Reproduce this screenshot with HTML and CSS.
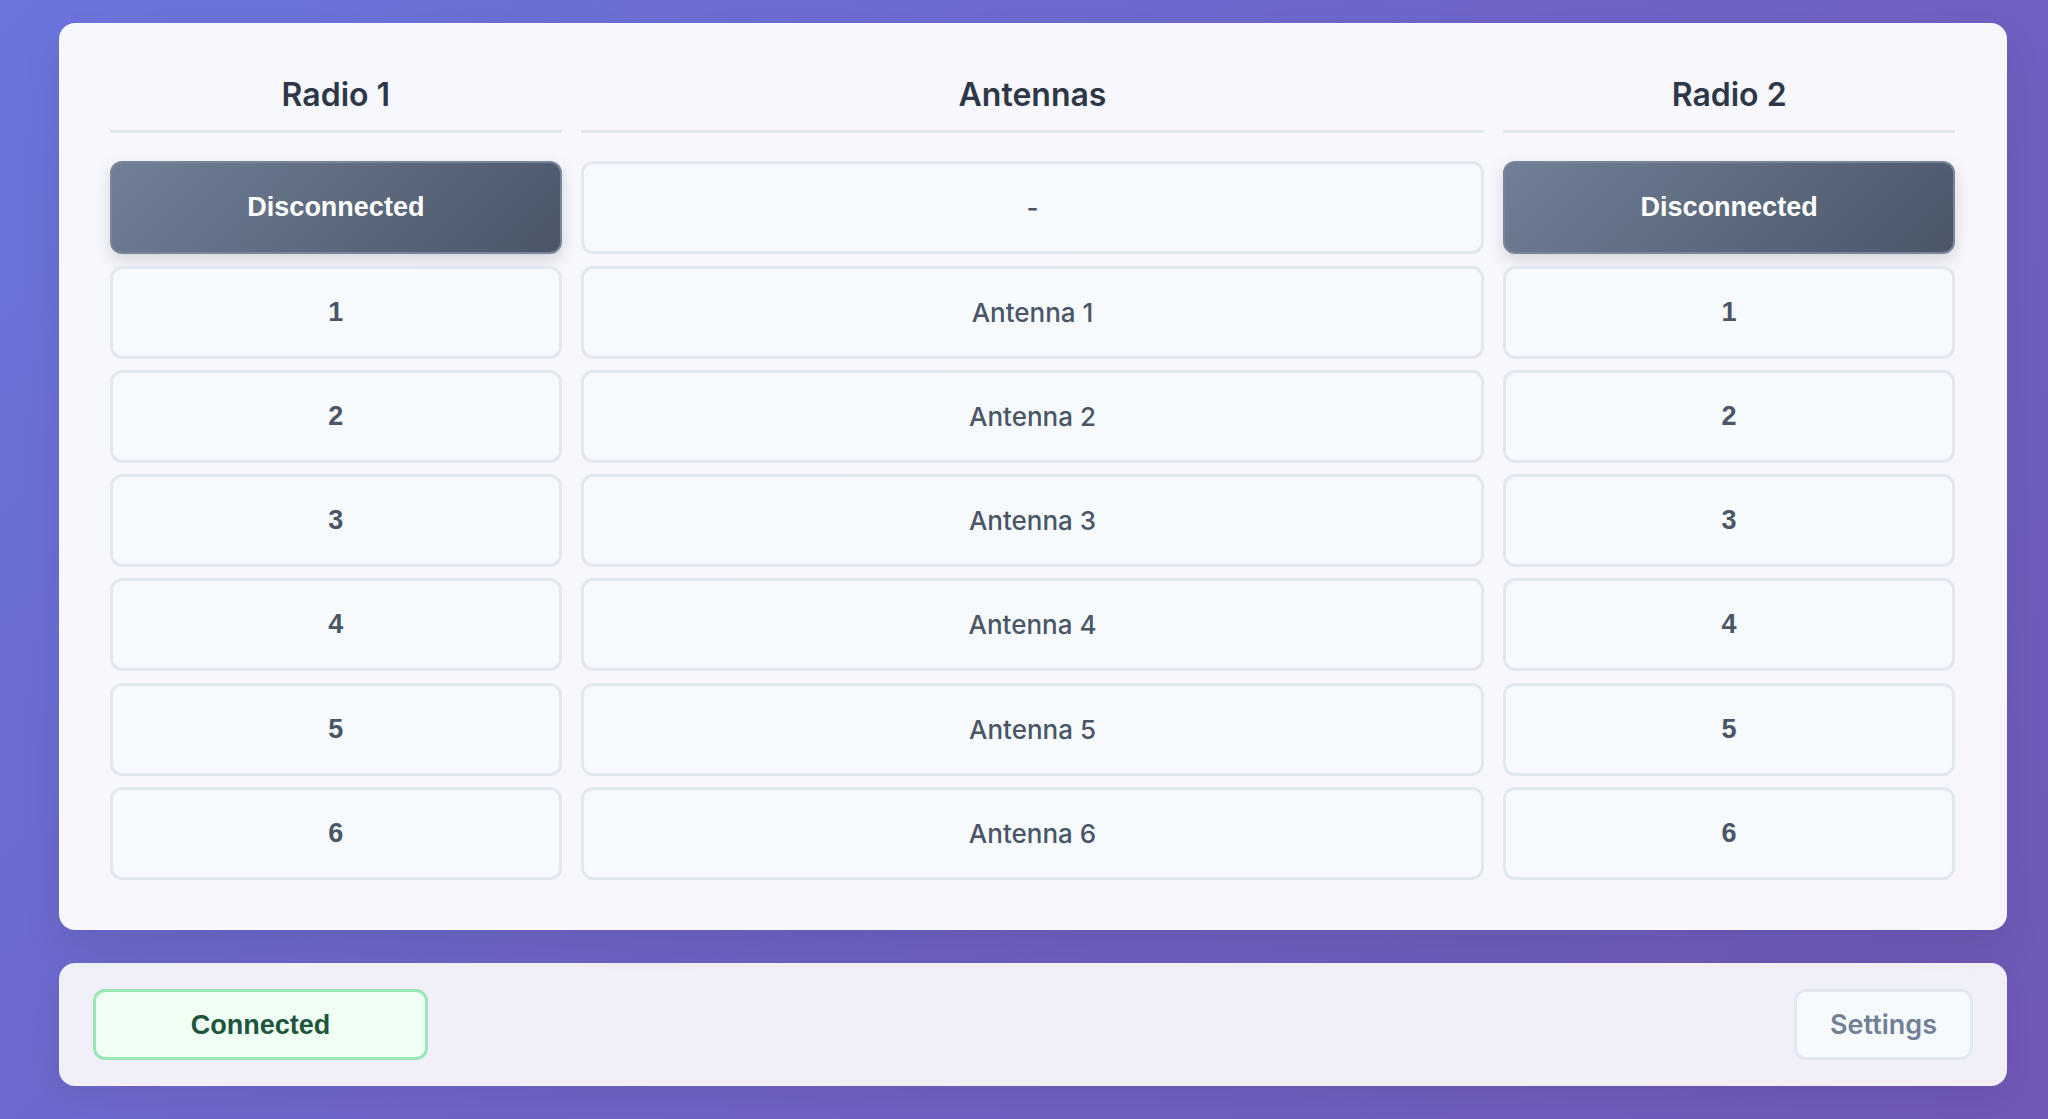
FILE: index.html
```html
<!DOCTYPE html>
<html lang="en">
<head>
<meta charset="utf-8">
<title>Antenna Switch</title>
<link rel="stylesheet" href="styles.css">
</head>
<body>
  <main class="panel">
    <div class="matrix">
      <section class="column">
        <h2 class="col-head">Radio 1</h2>
        <button class="cell cell-num cell-active">Disconnected</button>
        <button class="cell cell-num">1</button>
        <button class="cell cell-num">2</button>
        <button class="cell cell-num">3</button>
        <button class="cell cell-num">4</button>
        <button class="cell cell-num">5</button>
        <button class="cell cell-num">6</button>
      </section>
      <section class="column">
        <h2 class="col-head">Antennas</h2>
        <div class="cell cell-name">-</div>
        <div class="cell cell-name">Antenna 1</div>
        <div class="cell cell-name">Antenna 2</div>
        <div class="cell cell-name">Antenna 3</div>
        <div class="cell cell-name">Antenna 4</div>
        <div class="cell cell-name">Antenna 5</div>
        <div class="cell cell-name">Antenna 6</div>
      </section>
      <section class="column">
        <h2 class="col-head">Radio 2</h2>
        <button class="cell cell-num cell-active">Disconnected</button>
        <button class="cell cell-num">1</button>
        <button class="cell cell-num">2</button>
        <button class="cell cell-num">3</button>
        <button class="cell cell-num">4</button>
        <button class="cell cell-num">5</button>
        <button class="cell cell-num">6</button>
      </section>
    </div>
  </main>
  <footer class="statusbar">
    <div class="status status-ok">Connected</div>
    <button class="settings-btn">Settings</button>
  </footer>
</body>
</html>
```
FILE: styles.css
```css
* {
  box-sizing: border-box;
}

html, body {
  margin: 0;
  height: 100%;
}

body {
  height: 100vh;
  overflow: hidden;
  padding: 23px 41px 0 59px;
  background: linear-gradient(135deg, #6a75dd 0%, #6e64c6 50%, #7058b5 100%);
  font-family: Inter, "Noto Sans", sans-serif;
  display: flex;
  flex-direction: column;
  gap: 33px;
}

.panel {
  background: rgba(255, 255, 255, 0.95);
  border-radius: 16px;
  padding: 52px 52px 50px 51px;
  box-shadow: 0 20px 40px rgba(0, 0, 0, 0.08);
}

.matrix {
  display: grid;
  grid-template-columns: 1fr 2fr 1fr;
  column-gap: 19px;
}

.column {
  display: flex;
  flex-direction: column;
  gap: 11.3px;
}

.col-head {
  margin: 0 0 17px;
  font-size: 32px;
  line-height: 40px;
  font-weight: 600;
  color: #2d3748;
  text-align: center;
  padding-bottom: 15px;
  border-bottom: 3px solid #e2e8f0;
}

.cell {
  height: 93px;
  display: flex;
  align-items: center;
  justify-content: center;
  background: #f7fafc;
  border: 3px solid #e2e8f0;
  border-radius: 12px;
  color: #4a5568;
  padding: 0;
  margin: 0;
}

.cell-num {
  font-family: "Liberation Sans", Arial, sans-serif;
  font-weight: 700;
  font-size: 27px;
}

.cell-name {
  font-family: Inter, "Noto Sans", sans-serif;
  font-weight: 500;
  font-size: 26px;
}

.cell-active {
  background: linear-gradient(135deg, #718096 0%, #4a5568 100%);
  border: 2px solid #7a8599;
  color: #ffffff;
  box-shadow: 0 6px 16px rgba(45, 55, 72, 0.18);
}

.statusbar {
  background: rgba(255, 255, 255, 0.9);
  border-radius: 16px;
  padding: 26px 34px;
  display: flex;
  align-items: center;
  justify-content: space-between;
  box-shadow: 0 10px 30px rgba(0, 0, 0, 0.06);
}

.status {
  width: 335px;
  height: 71px;
  border-radius: 12px;
  display: flex;
  align-items: center;
  justify-content: center;
  font-family: "Liberation Sans", Arial, sans-serif;
  font-weight: 700;
  font-size: 27px;
  padding-top: 2px;
}

.status-ok {
  background: #f0fff4;
  border: 3px solid #9ae6b4;
  color: #22543d;
}

.settings-btn {
  width: 179px;
  height: 71px;
  border-radius: 12px;
  background: #f7fafc;
  border: 3px solid #e2e8f0;
  color: #718096;
  font-family: Inter, "Noto Sans", sans-serif;
  font-weight: 600;
  font-size: 27px;
  padding: 0;
}
```
